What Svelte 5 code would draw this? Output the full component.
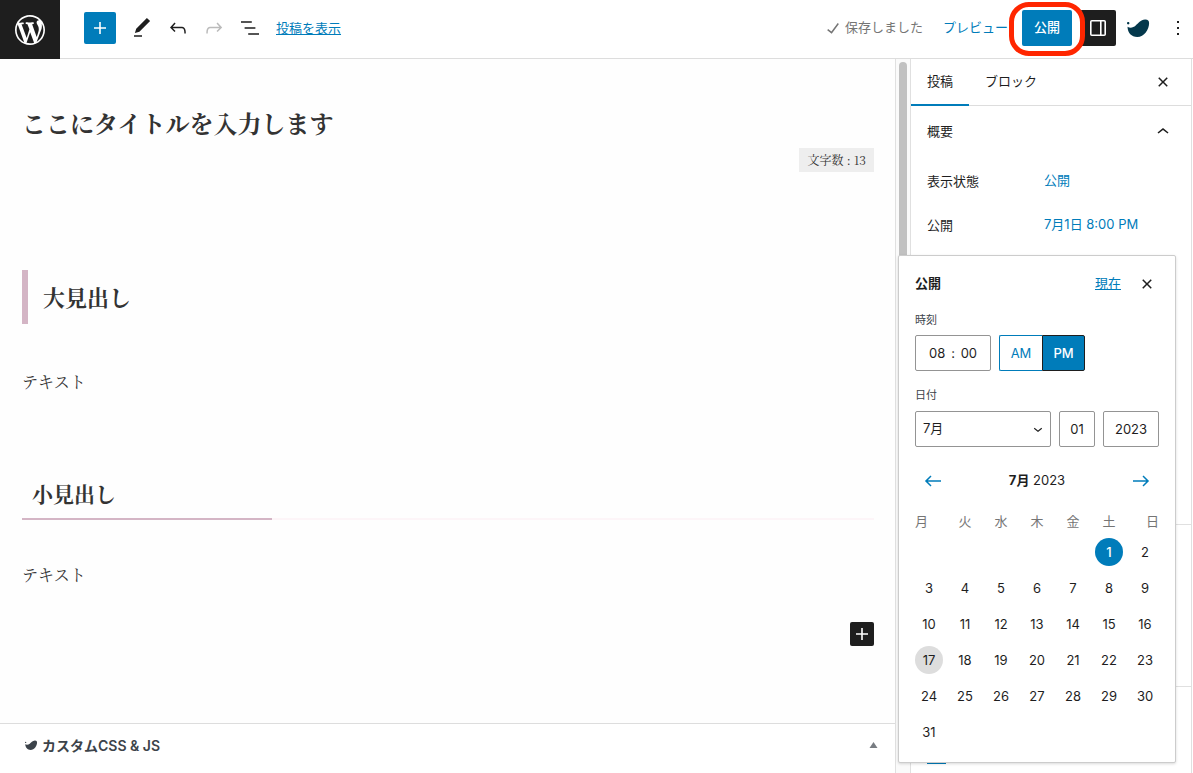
<script>
  const icons = {
    plus: 'M18 11.2h-5.2V6h-1.6v5.2H6v1.6h5.2V18h1.6v-5.2H18z',
    edit: 'M20.1 5.1L16.9 2 6.2 12.7l-1.3 4.4 4.5-1.3L20.1 5.1zM4 20.8h8v-1.5H4v1.5z',
    undo: 'M18.3 11.7c-.6-.6-1.4-.9-2.3-.9H6.7l2.9-3.3-1.1-1-4.5 5L8.5 16l1-1-2.7-2.7H16c.5 0 .9.2 1.3.5 1 1 1 3.4 1 4.5v.3h1.5v-.2c0-1.5 0-4.3-1.5-5.7z',
    redo: 'M15.6 6.5l-1.1 1 2.9 3.3H8c-.9 0-1.7.3-2.3.9-1.4 1.5-1.4 4.2-1.4 5.6v.2h1.5v-.3c0-1.1 0-3.5 1-4.5.3-.3.7-.5 1.3-.5h9.2L14.5 15l1.1 1.1 4.6-4.6-4.6-5z',
    list: 'M13.8 5.2H3v1.5h10.8V5.2zm-3.6 12v1.5H21v-1.5H10.2zm7.2-6H6.6v1.5h10.8v-1.5z',
    check: 'M16.7 7.1l-6.3 8.5-3.3-2.5-.9 1.2 4.5 3.4L17.9 8z',
    close: 'M12 13.06l3.712 3.713 1.061-1.06L13.061 12l3.712-3.712-1.06-1.06L12 10.938 8.288 7.227l-1.061 1.06L10.939 12l-3.712 3.712 1.06 1.061L12 13.061z',
    up: 'M6.5 12.4L12 8l5.5 4.4-.9 1.2L12 10l-4.5 3.6-1-1.2z',
    down: 'M17.5 11.6L12 16l-5.5-4.4.9-1.2L12 14l4.5-3.6 1 1.2z',
    left: 'M20 11.2H6.8l3.7-3.7-1-1L3.9 12l5.6 5.5 1-1-3.7-3.7H20z',
    right: 'M14.5 6.5l-1 1 3.7 3.7H4v1.6h13.2l-3.7 3.7 1 1 5.6-5.5z',
    more: 'M13 19h-2v-2h2v2zm0-6h-2v-2h2v2zm0-6h-2V5h2v2z',
    whale: 'M1 6.300c0-.7.500-1.200 1.200-1.200s1.200.5 1.200 1.200-.5 1.200-1.200 1.200S1 7 1 6.300zM1.500 9.800c2.500 1.500 5.800 1 8.200-1.200C12.200 6.300 14.600 3 19 2.600c2.700-.2 4.100 1.200 4.100 3.600 0 6-4.900 13.800-11.800 13.800C5.500 20 1.700 16 1.500 9.800z'
  };

  const weekdays = ['月', '火', '水', '木', '金', '土', '日'];
  const days = Array.from({ length: 31 }, (_, i) => i + 1);
  const today = 17;

  let hours = '08';
  let minutes = '00';
  let meridiem = 'PM';
  let month = 7;
  let day = '01';
  let year = '2023';
</script>

<div class="page">
  <header class="header">
    <a class="logo" href="#dashboard" aria-label="WordPress">
      <svg width="36" height="36" viewBox="-2 -2 24 24"><path d="M20 10c0-5.51-4.49-10-10-10C4.48 0 0 4.49 0 10c0 5.52 4.48 10 10 10 5.51 0 10-4.48 10-10zM7.78 15.37L4.37 6.22c.55-.02 1.17-.08 1.17-.08.5-.06.44-1.13-.06-1.11 0 0-1.45.11-2.37.11-.18 0-.37 0-.58-.01C4.12 2.69 6.87 1.11 10 1.11c2.33 0 4.45.87 6.05 2.34-.68-.11-1.65.39-1.65 1.58 0 .74.45 1.36.9 2.1.35.61.55 1.36.55 2.46 0 1.49-1.4 5-1.4 5l-3.03-8.37c.54-.02.82-.17.82-.17.5-.05.44-1.25-.06-1.22 0 0-1.44.12-2.38.12-.87 0-2.33-.12-2.33-.12-.5-.03-.56 1.2-.06 1.22l.92.08 1.26 3.41zM17.41 10c.24-.64.74-1.87.43-4.25.7 1.29 1.05 2.71 1.05 4.25 0 3.29-1.73 6.24-4.4 7.78.97-2.59 1.94-5.2 2.92-7.78zM6.1 18.09C3.12 16.65 1.11 13.53 1.11 10c0-1.3.23-2.48.72-3.59C3.25 10.3 4.67 14.2 6.1 18.09zm4.03-6.63l2.58 6.98c-.86.29-1.76.45-2.71.45-.79 0-1.57-.11-2.29-.33.81-2.38 1.62-4.74 2.42-7.1z" /></svg>
    </a>
    <div class="tools">
      <button class="inserter" aria-label="ブロック挿入"><svg viewBox="0 0 24 24"><path d={icons.plus} /></svg></button>
      <div class="tool-group">
        <button class="icon-button" aria-label="ツール"><svg viewBox="0 0 24 24"><path d={icons.edit} /></svg></button>
        <button class="icon-button" aria-label="元に戻す"><svg viewBox="0 0 24 24"><path d={icons.undo} /></svg></button>
        <button class="icon-button" aria-label="やり直す" disabled><svg viewBox="0 0 24 24"><path d={icons.redo} /></svg></button>
        <button class="icon-button" aria-label="リスト表示"><svg viewBox="0 0 24 24"><path d={icons.list} /></svg></button>
      </div>
      <a class="view-post" href="#posts">投稿を表示</a>
    </div>
    <div class="settings">
      <span class="saved"><svg viewBox="0 0 24 24"><path d={icons.check} /></svg><span>保存しました</span></span>
      <button class="preview">プレビュー</button>
      <div class="publish-wrap">
        <button class="publish">公開</button>
        <span class="ring"></span>
      </div>
      <button class="panel-toggle" aria-label="設定">
        <svg viewBox="0 0 24 24"><rect x="4.800" y="4.800" width="14.400" height="14.400" rx="1" fill="none" stroke="currentColor" stroke-width="1.600" /><path d="M14 5h1.600v14H14z" /></svg>
      </button>
      <button class="icon-button whale" aria-label="テーマ設定"><svg viewBox="0 0 24 22"><path d={icons.whale} /></svg></button>
      <button class="more" aria-label="オプション"><svg viewBox="0 0 24 24"><path d={icons.more} /></svg></button>
    </div>
  </header>

  <div class="body">
    <main class="editor">
      <div class="canvas">
        <h1>ここにタイトルを入力します</h1>
        <span class="count">文字数 : 13</span>
        <h2>大見出し</h2>
        <p class="after-h2">テキスト</p>
        <h3>小見出し</h3>
        <p class="after-h3">テキスト</p>
        <button class="append" aria-label="ブロックを追加"><svg viewBox="0 0 24 24"><path d={icons.plus} /></svg></button>
      </div>
      <button class="meta-box">
        <svg class="meta-icon" viewBox="0 0 24 22"><path d={icons.whale} /></svg>
        <span>カスタムCSS &amp; JS</span>
        <svg class="triangle" viewBox="0 0 8 6"><path d="M4 0l4 6H0z" /></svg>
      </button>
    </main>

    <div class="scroll-track"><div class="scroll-thumb"></div></div>

    <aside class="sidebar">
      <div class="tabs">
        <button class="tab active">投稿</button>
        <button class="tab">ブロック</button>
        <button class="small-button" aria-label="設定を閉じる"><svg viewBox="0 0 24 24"><path d={icons.close} /></svg></button>
      </div>
      <section class="summary">
        <button class="panel-title">概要<svg viewBox="0 0 24 24"><path d={icons.up} /></svg></button>
        <div class="row"><span>表示状態</span><button class="value">公開</button></div>
        <div class="row"><span>公開</span><button class="value">7月1日 8:00 PM</button></div>
      </section>
      <section class="panel"></section>
      <section class="rest"><div class="rest-line"></div></section>

      <div class="popover">
        <div class="popover-head">
          <strong>公開</strong>
          <a href="#now">現在</a>
          <button class="small-button" aria-label="閉じる"><svg viewBox="0 0 24 24"><path d={icons.close} /></svg></button>
        </div>

        <label class="legend" for="hours">時刻</label>
        <div class="fields">
          <div class="time">
            <input id="hours" bind:value={hours} />
            <span>:</span>
            <input aria-label="分" bind:value={minutes} />
          </div>
          <div class="meridiem">
            <button class:on={meridiem === 'AM'} on:click={() => (meridiem = 'AM')}>AM</button>
            <button class:on={meridiem === 'PM'} on:click={() => (meridiem = 'PM')}>PM</button>
          </div>
        </div>

        <label class="legend" for="month">日付</label>
        <div class="fields">
          <div class="month">
            <select id="month" bind:value={month}>
              {#each Array(12) as _, i}
                <option value={i + 1}>{i + 1}月</option>
              {/each}
            </select>
            <svg viewBox="0 0 24 24"><path d={icons.down} /></svg>
          </div>
          <input class="day-input" aria-label="日" bind:value={day} />
          <input class="year-input" aria-label="年" bind:value={year} />
        </div>

        <div class="month-nav">
          <button aria-label="前の月"><svg viewBox="0 0 24 24"><path d={icons.left} /></svg></button>
          <div class="month-name"><strong>{month}月</strong> {year}</div>
          <button aria-label="次の月"><svg viewBox="0 0 24 24"><path d={icons.right} /></svg></button>
        </div>

        <div class="calendar weekdays">
          {#each weekdays as name}
            <span>{name}</span>
          {/each}
        </div>
        <div class="calendar">
          {#each days as d (d)}
            <button class="day" class:today={d === today} class:selected={d === Number(day)} on:click={() => (day = String(d).padStart(2, '0'))}>{d}</button>
          {/each}
        </div>
      </div>
    </aside>
  </div>
</div>

<style>
  :global(body) {
    background: #fff;
    color: #1e1e1e;
    font-family: Inter, 'Noto Sans CJK JP', sans-serif;
    font-size: 13px;
  }

  * {
    box-sizing: border-box;
  }

  button,
  input,
  select {
    margin: 0;
    padding: 0;
    border: none;
    background: none;
    color: inherit;
    font: inherit;
  }

  button {
    display: flex;
    align-items: center;
    justify-content: center;
    cursor: pointer;
  }

  svg {
    width: 24px;
    height: 24px;
    fill: currentColor;
    flex: none;
  }

  a {
    color: #007cba;
  }

  .page {
    display: flex;
    flex-direction: column;
    height: 100vh;
    overflow: hidden;
  }

  .header {
    display: flex;
    box-shadow: inset 0 -1px #ddd;
    flex: none;
  }

  .logo {
    display: flex;
    align-items: center;
    justify-content: center;
    width: 60px;
    height: 59px;
    background: #1e1e1e;
    color: #fff;
  }

  .logo svg {
    width: 36px;
    height: 36px;
  }

  .tools,
  .settings {
    display: flex;
    align-items: center;
    height: 56px;
  }

  .tools {
    gap: 8px;
    padding-left: 24px;
  }

  .tool-group {
    display: flex;
  }

  .inserter {
    width: 32px;
    height: 32px;
    border-radius: 2px;
    background: #007cba;
    color: #fff;
  }

  .icon-button {
    width: 36px;
    height: 36px;
  }

  .icon-button:disabled {
    color: #bbb;
  }

  .view-post {
    padding-bottom: 2px;
  }

  .settings {
    margin-left: auto;
    padding-right: 3px;
  }

  .saved {
    display: flex;
    align-items: center;
    margin-right: 20px;
    color: #757575;
  }

  .saved span,
  .preview {
    padding-bottom: 4px;
  }

  .preview {
    margin-right: 14px;
    color: #007cba;
  }

  .publish-wrap {
    position: relative;
    margin-right: 8px;
  }

  .publish {
    height: 36px;
    padding: 0 12px 4px;
    border-radius: 2px;
    background: #007cba;
    color: #fff;
    font-weight: 500;
  }

  .ring {
    position: absolute;
    inset: -8px -13px -10px;
    border: 5px solid #ff2600;
    border-radius: 20px;
    pointer-events: none;
  }

  .panel-toggle {
    width: 36px;
    height: 36px;
    margin-right: 4px;
    border-radius: 2px;
    background: #1e1e1e;
    color: #fff;
  }

  .whale {
    margin-right: 10px;
    color: #04384c;
  }

  .body {
    display: flex;
    flex: 1;
    min-height: 0;
  }

  .editor {
    display: flex;
    flex-direction: column;
    flex: 1;
    border-right: 1px solid #e0e0e0;
  }

  .canvas {
    display: flex;
    flex-direction: column;
    flex: 1;
    padding: 46px 21px 0 22px;
    background: #fefefe;
    color: #333;
    font-family: 'Noto Serif CJK JP', 'Noto Serif JP', 'Liberation Serif', 'Noto Sans CJK JP', serif;
  }

  h1,
  h2,
  h3,
  p {
    margin: 0;
  }

  h1 {
    font-size: 24px;
    line-height: 36px;
  }

  .count {
    align-self: flex-end;
    margin-top: 7px;
    padding: 0 8px 0 9px;
    background: #eee;
    font-size: 12px;
    line-height: 24px;
  }

  h2 {
    margin-top: 98px;
    padding-left: 15px;
    border-left: 6px solid #d4b5c5;
    font-size: 22px;
    line-height: 54px;
  }

  h3 {
    margin-top: 78px;
    padding: 0 10px 10px;
    background: linear-gradient(to right, #d4b5c5 250px, #fdf5f8 250px) bottom / 100% 2px no-repeat;
    font-size: 21px;
    line-height: 34px;
  }

  p {
    font-size: 16px;
    line-height: 32px;
  }

  .after-h2 {
    margin-top: 42px;
  }

  .after-h3 {
    margin-top: 39px;
  }

  .append {
    align-self: flex-end;
    width: 24px;
    height: 24px;
    margin-top: 31px;
    border-radius: 2px;
    background: #1e1e1e;
    color: #fff;
  }

  .meta-box {
    justify-content: flex-start;
    gap: 4px;
    height: 50px;
    padding: 0 17px 7px 24px;
    border-top: 1px solid #ddd;
    color: #3c434a;
    font-size: 14px;
    font-weight: 600;
  }

  .meta-icon {
    width: 14px;
    height: 12px;
  }

  .triangle {
    width: 9px;
    height: 6px;
    margin-left: auto;
    color: #787c82;
  }

  .scroll-track {
    width: 14px;
    padding: 3px;
    background: #fafafa;
  }

  .scroll-thumb {
    height: 60%;
    border-radius: 4px;
    background: #c1c1c1;
  }

  .sidebar {
    position: relative;
    display: flex;
    flex-direction: column;
    width: 282px;
    margin-right: 1px;
    border: solid #e0e0e0;
    border-width: 0 1px;
  }

  .tabs {
    display: flex;
    height: 47px;
    padding-right: 16px;
    border-bottom: 1px solid #ddd;
  }

  .tab {
    height: 47px;
    padding: 0 16px 5px;
  }

  .tab.active {
    box-shadow: inset 0 -2px #007cba;
  }

  .small-button {
    width: 24px;
    margin-left: auto;
  }

  .summary {
    flex: 0 0 419px;
    padding: 0 16px;
    border-bottom: 1px solid #e0e0e0;
  }

  .panel-title {
    justify-content: space-between;
    width: 100%;
    height: 48px;
    margin-bottom: 8px;
  }

  .panel-title svg {
    margin-top: 3px;
  }

  .row {
    display: grid;
    grid-template-columns: 117px 1fr;
    align-items: center;
    height: 36px;
    margin-bottom: 8px;
  }

  .value {
    justify-self: start;
    padding-bottom: 2px;
    color: #007cba;
  }

  .panel {
    flex: 0 0 162px;
    border-bottom: 1px solid #e0e0e0;
  }

  .rest {
    padding: 76px 16px 0;
  }

  .rest-line {
    width: 19px;
    height: 1px;
    background: #007cba;
  }

  .popover {
    position: absolute;
    top: 196px;
    right: 15px;
    width: 278px;
    padding: 16px;
    border: 1px solid #ccc;
    border-radius: 2px;
    background: #fff;
    box-shadow: 0 1px 3px rgba(0, 0, 0, 0.15);
  }

  .popover-head {
    display: flex;
    align-items: center;
    height: 24px;
    margin-bottom: 16px;
  }

  .popover-head strong,
  .popover-head a {
    padding-bottom: 4px;
  }

  .popover-head a {
    margin-left: auto;
  }

  .popover-head .small-button {
    margin-left: 14px;
  }

  .legend {
    display: block;
    height: 24px;
    margin-top: 16px;
    color: #3c434a;
    font-size: 11px;
    line-height: 16px;
  }

  .popover-head + .legend {
    height: 23px;
    margin-top: 0;
  }

  .fields {
    display: flex;
    gap: 8px;
  }

  .time,
  .month select,
  .day-input,
  .year-input {
    height: 36px;
    border: 1px solid #949494;
    border-radius: 2px;
    background: #fff;
  }

  .time {
    display: flex;
    align-items: center;
    justify-content: center;
    gap: 2px;
    width: 76px;
  }

  .time input {
    width: 24px;
    text-align: center;
  }

  .meridiem {
    display: flex;
  }

  .meridiem button {
    width: 43px;
    height: 36px;
    border: 1px solid #007cba;
    border-right: none;
    border-radius: 2px 0 0 2px;
    color: #007cba;
  }

  .meridiem button + button {
    border-right: 1px solid #007cba;
    border-radius: 0 2px 2px 0;
  }

  .meridiem .on,
  .meridiem button + .on {
    border: 1px solid #1e1e1e;
    background: #007cba;
    color: #fff;
    font-weight: 500;
  }

  .month {
    position: relative;
    flex: 1;
  }

  .month select {
    width: 100%;
    padding: 0 7px 2px;
    appearance: none;
  }

  .month svg {
    position: absolute;
    top: 9px;
    right: 4px;
    width: 18px;
    height: 18px;
    pointer-events: none;
  }

  .day-input {
    width: 36px;
    text-align: center;
  }

  .year-input {
    width: 56px;
    text-align: center;
  }

  .month-nav {
    display: flex;
    align-items: center;
    justify-content: space-between;
    margin-top: 16px;
  }

  .month-name {
    padding-bottom: 4px;
  }

  .month-nav button {
    width: 36px;
    height: 36px;
    color: #007cba;
  }

  .calendar {
    display: grid;
    grid-template-columns: repeat(7, 28px);
    justify-content: space-between;
    row-gap: 8px;
  }

  .weekdays {
    margin: 12px 0 7px;
    color: #757575;
    line-height: 20px;
    text-align: center;
  }

  .weekdays span:first-child {
    text-align: left;
  }

  .weekdays span:last-child {
    text-align: right;
  }

  .day {
    width: 28px;
    height: 28px;
    border-radius: 50%;
  }

  /* the month starts on a Saturday */
  .day:first-child {
    grid-column: 6;
  }

  .day.today {
    background: #ddd;
  }

  .day.selected {
    background: #007cba;
    color: #fff;
    font-weight: 500;
  }
</style>
